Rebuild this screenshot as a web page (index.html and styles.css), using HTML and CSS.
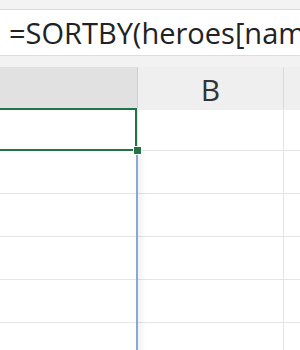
FILE: index.html
```html
<!DOCTYPE html>
<html>
<head>
<meta charset="utf-8">
<link rel="stylesheet" href="styles.css">
</head>
<body>
<div class="app">
  <div class="topstrip"></div>
  <div class="formula"><span class="ftext">=SORTBY(heroes[name],heroes[power],-1)</span></div>
  <div class="band"></div>
  <div class="headers">
    <div class="hcell hsel"></div>
    <div class="hcell">B</div>
    <div class="hcell hrest"></div>
  </div>
  <div class="grid">
    <div class="row">
      <div class="cell ca active">
        <div class="selbox"></div>
        <div class="handle"></div>
      </div>
      <div class="cell cb"></div>
      <div class="cell cc"></div>
    </div>
    <div class="row"><div class="cell ca"></div><div class="cell cb"></div><div class="cell cc"></div></div>
    <div class="row"><div class="cell ca"></div><div class="cell cb"></div><div class="cell cc"></div></div>
    <div class="row"><div class="cell ca"></div><div class="cell cb"></div><div class="cell cc"></div></div>
    <div class="row"><div class="cell ca"></div><div class="cell cb"></div><div class="cell cc"></div></div>
    <div class="row"><div class="cell ca"></div><div class="cell cb"></div><div class="cell cc"></div></div>
    <div class="guide"></div>
  </div>
</div>
</body>
</html>
```
FILE: styles.css
```css
* { box-sizing: border-box; }
html, body { margin: 0; padding: 0; background: #fff; }
.app { width: 300px; height: 350px; overflow: hidden; font-family: "Open Sans", "Noto Sans", sans-serif; }
.topstrip { height: 10px; background: #f3f3f3; border-bottom: 1px solid #d9d9d9; }
.formula { height: 46px; background: #fff; border-bottom: 1px solid #dcdcdc; white-space: nowrap; overflow: hidden; padding-left: 9px; display: flex; align-items: center; }
.ftext { font-size: 29px; color: #222; letter-spacing: 0; }
.band { height: 11px; background: #f2f2f2; }
.headers { display: grid; grid-template-columns: 138px 146px 1fr; height: 41px; border-bottom: 1px solid #bfbfbf; }
.hcell { background: #efefef; border-right: 1px solid #d9d9d9; display: flex; align-items: center; justify-content: center; font-size: 30px; color: #333; padding-top: 2px; }
.hsel { background: #e1e1e1; border-right: 1px solid #cfcfcf; }
.hrest { border-right: none; }
.grid { position: relative; }
.row { display: grid; grid-template-columns: 138px 146px 1fr; height: 43px; }
.cell { border-bottom: 1px solid #e4e4e4; border-right: 1px solid #e4e4e4; }
.cc { border-right: none; }
.active { position: relative; }
.selbox { position: absolute; left: -3px; top: 0; right: 0; bottom: -1px; border: 2px solid #227447; }
.handle { position: absolute; right: -4px; bottom: -4px; width: 7px; height: 7px; background: #227447; border: 1px solid #fff; box-sizing: content-box; margin: -1px; }
.guide { position: absolute; left: 136px; top: 47px; width: 10px; border-left: 2px solid #8aa6dc; background: linear-gradient(to right, rgba(0,0,0,0.05), rgba(0,0,0,0)); height: 300px; }
```
